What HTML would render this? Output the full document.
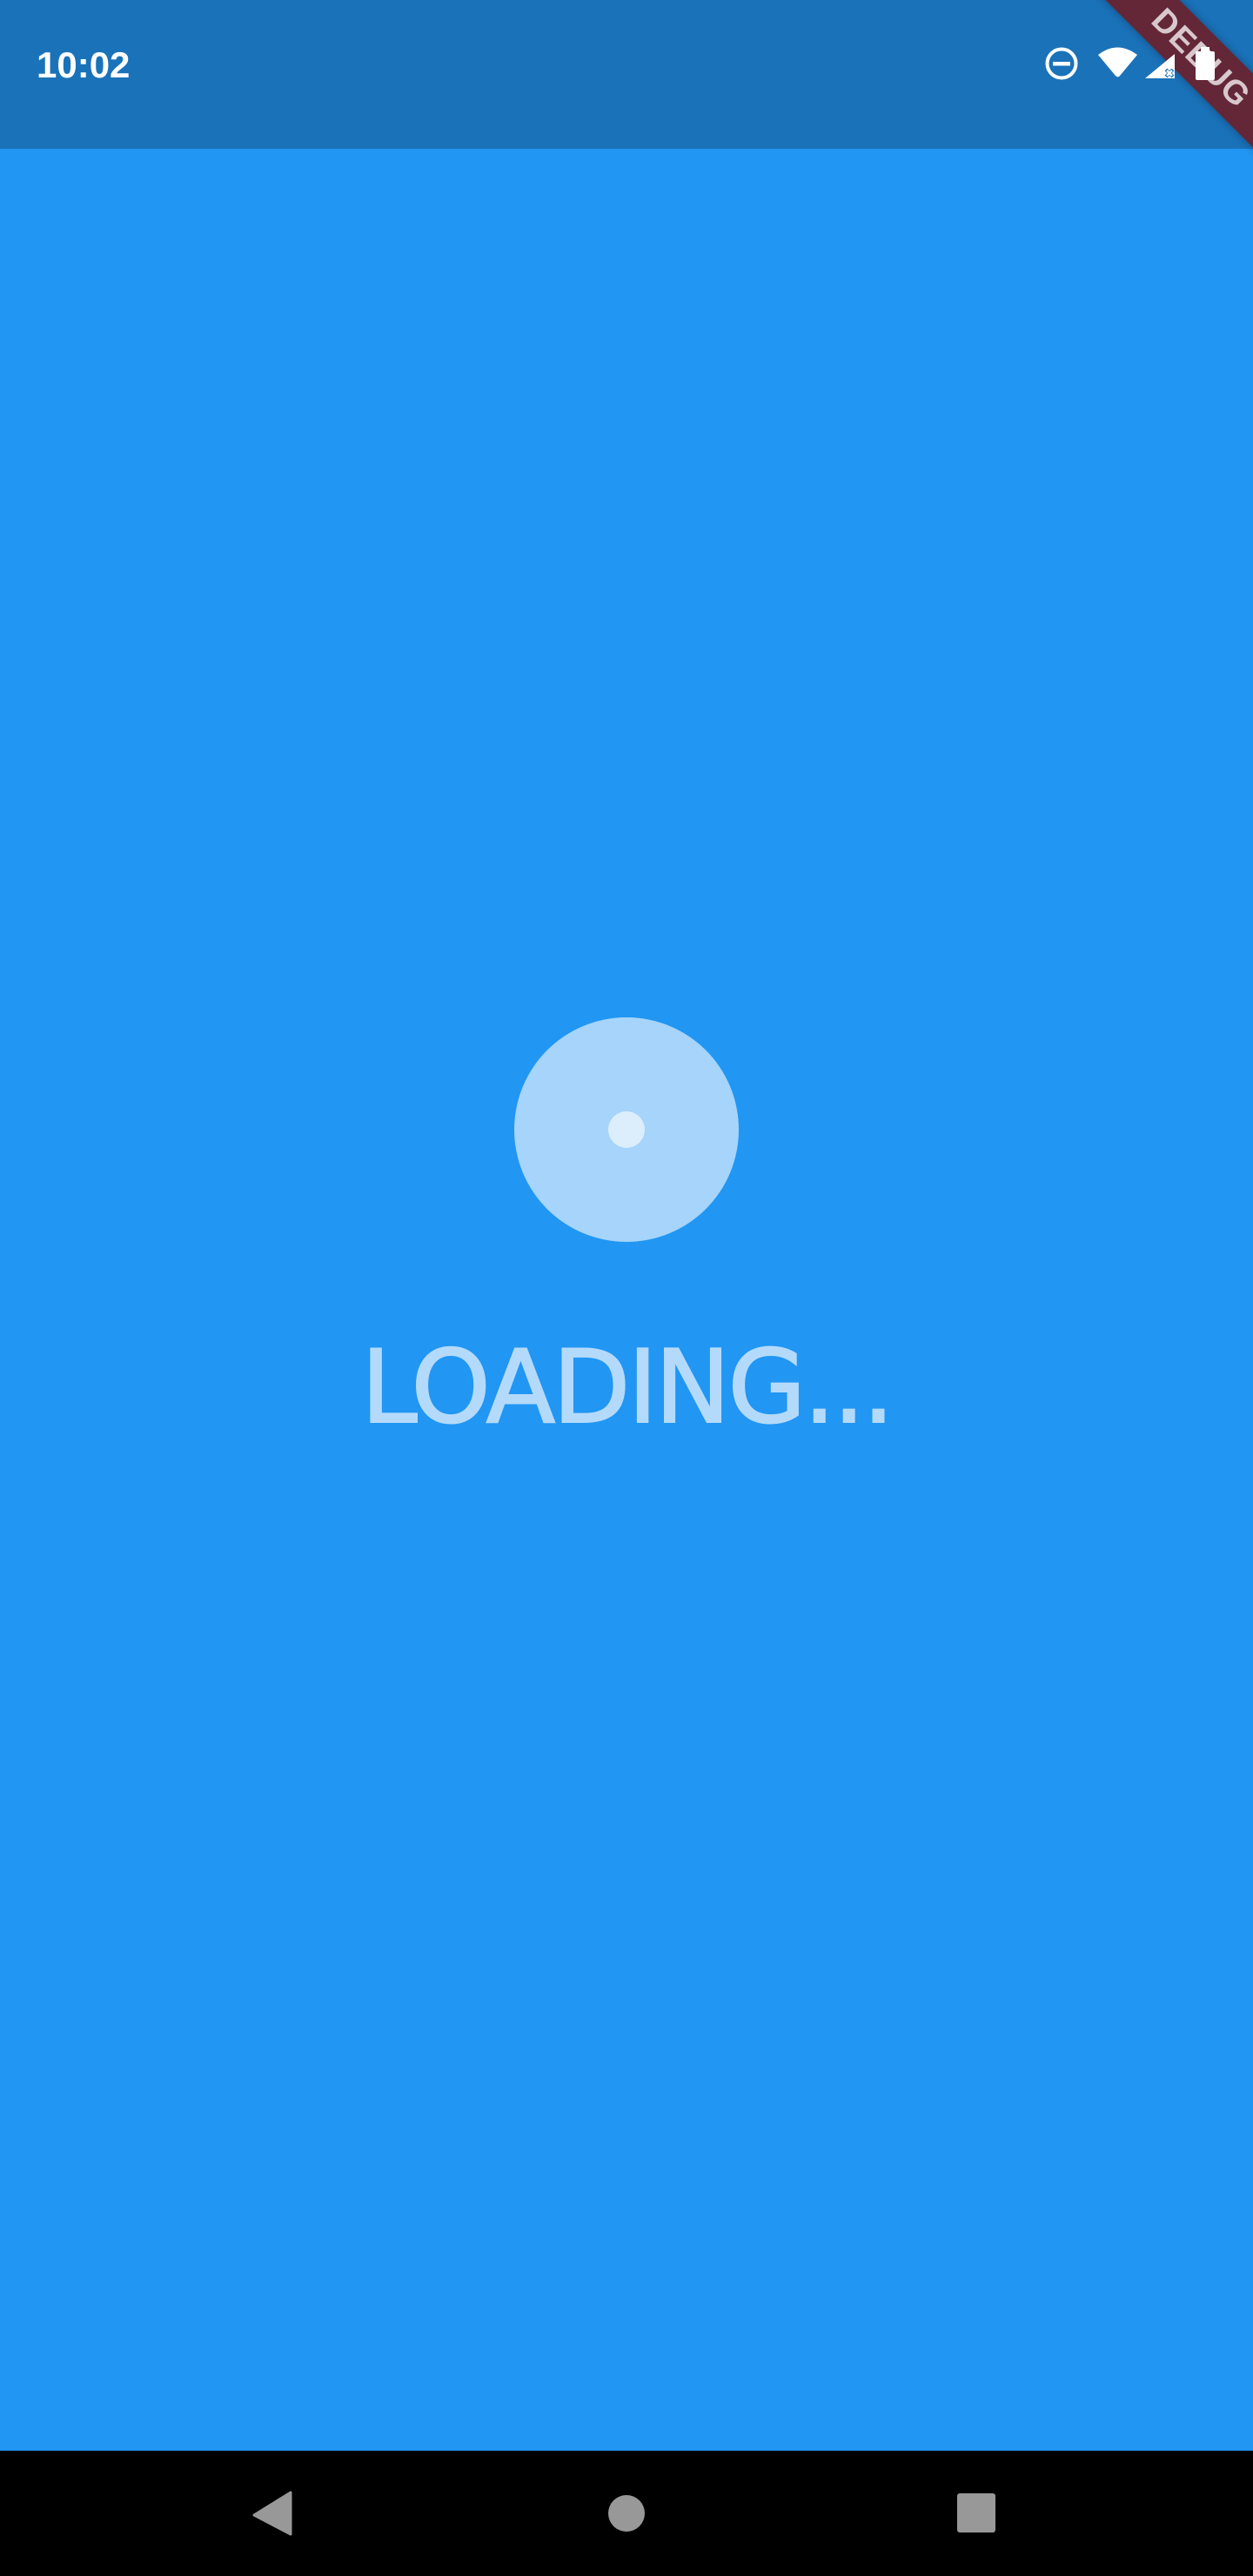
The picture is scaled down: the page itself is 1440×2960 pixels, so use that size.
<!DOCTYPE html>
<html><head><meta charset="utf-8"><style>
html,body{margin:0;padding:0}
body{width:1440px;height:2960px;background:#2196F3;position:relative;overflow:hidden;font-family:"Liberation Sans",sans-serif}
.a{position:absolute}
</style></head><body>
<div class="a" style="left:0;top:0;width:1440px;height:171px;background:#1A72B9"></div>
<div class="a" style="left:42px;top:50px;font-size:42px;color:#fff;line-height:50px;font-weight:bold">10:02</div>
<div class="a" style="left:1180px;top:37px;width:400px;height:60px;background:#632738;transform:rotate(45deg);transform-origin:center;color:rgba(255,255,255,0.75);font-weight:bold;font-size:38px;line-height:60px;text-align:center;letter-spacing:1px;box-shadow:0 0 10px rgba(0,0,0,0.3)">DEBUG</div>
<svg class="a" style="left:1190px;top:40px" width="250" height="70" viewBox="1190 40 250 70">
 <circle cx="1220" cy="73" r="16.5" fill="none" stroke="#fff" stroke-width="4"/>
 <rect x="1210" y="71" width="20" height="4.5" fill="#fff"/>
 <path d="M1262 63 Q1284 46 1307 63 L1287 87 Q1285 90 1282 87 Z" fill="#fff"/>
 <path d="M1316 90 L1350 90 L1350 62 Z" fill="#fff"/>
 <path d="M1340 80 L1348 88 M1348 80 L1340 88" stroke="#1A72B9" stroke-width="4"/>
 <path d="M1341 81 L1347 87 M1347 81 L1341 87" stroke="#fff" stroke-width="2.5"/>
 <rect x="1374" y="59" width="22" height="33" rx="2" fill="#fff"/>
 <rect x="1380" y="54" width="10" height="6" fill="#fff"/>
</svg>
<div class="a" style="left:591px;top:1169px;width:258px;height:258px;border-radius:50%;background:#A6D4FA"></div>
<div class="a" style="left:699px;top:1277px;width:42px;height:42px;border-radius:50%;background:#DCEEFC"></div>
<div class="a" style="left:0;width:1440px;top:1530px;text-align:center;font-family:'DejaVu Sans',sans-serif;font-size:116px;line-height:130px;letter-spacing:-3px;color:#B4DAFB;-webkit-text-stroke:2px #B4DAFB">LOADING...</div>
<div class="a" style="left:0;top:2816px;width:1440px;height:144px;background:#000"></div>
<svg class="a" style="left:0;top:2816px" width="1440" height="144">
 <path d="M334 48 L334 96 L292 74 Z" fill="#989898" stroke="#989898" stroke-width="3" stroke-linejoin="round"/>
 <circle cx="720" cy="72" r="21" fill="#989898"/>
 <rect x="1100" y="49" width="44" height="45" rx="3" fill="#989898"/>
</svg>
</body></html>
